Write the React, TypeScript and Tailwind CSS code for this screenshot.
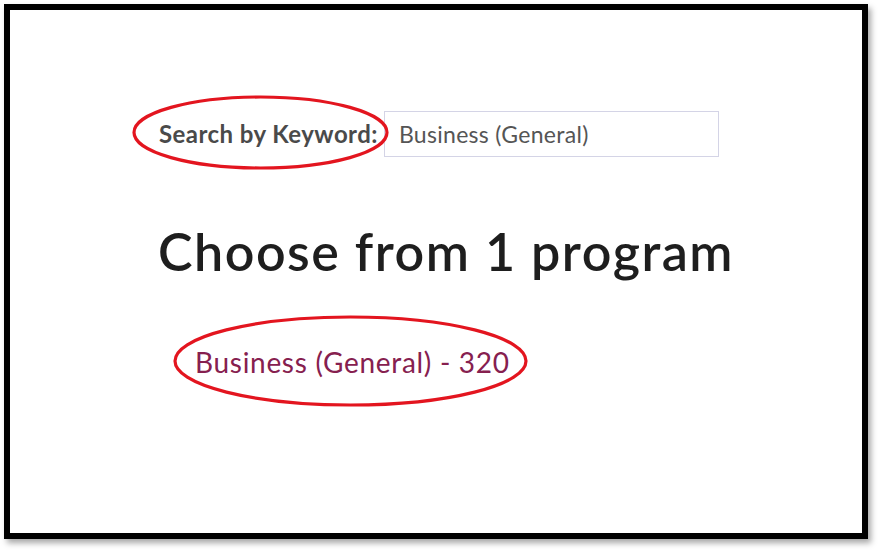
import React from 'react';

// red hand-drawn style annotation rings laid over the page
const Ring = ({ w, h, className }: { w: number; h: number; className: string }) => (
  <svg className={`absolute pointer-events-none ${className}`} width={w} height={h} viewBox={`0 0 ${w} ${h}`}>
    <ellipse cx={w / 2} cy={h / 2} rx={w / 2 - 2} ry={h / 2 - 2} fill="none" stroke="#e3151f" strokeWidth="3.2" />
  </svg>
);

const App = () => {
  return (
    <div className="w-[881px] h-[552px] bg-white pt-[4px] pl-[4px] font-['Lato','Liberation_Sans',sans-serif]">
      <div className="relative w-[864px] h-[535px] border-[6px] border-black bg-white shadow-[3px_4px_6px_rgba(0,0,0,0.35)]">
        {/* Search */}
        <div className="flex items-center pt-[101px] pl-[149px]">
          <label className="text-[24px] font-bold text-[#4a4a4a] mr-[6px] tracking-[0.45px] leading-none">Search by Keyword:</label>
          <div className="w-[335px] h-[46px] border border-[#d4d4e6] flex items-center pl-[14px] text-[23px] tracking-[0.3px] text-[#555]">
            Business (General)
          </div>
        </div>

        {/* Heading */}
        <h1 className="pl-[148px] mt-[68px] text-[52px] font-semibold text-[#1e1e1e] leading-none tracking-[1.5px]">
          Choose from 1 program
        </h1>

        {/* Result */}
        <a className="block pl-[185px] mt-[71px] text-[28px] text-[#86204f] leading-none tracking-[0.7px]">
          Business (General) - 320
        </a>

        <Ring w={257} h={75} className="left-[122px] top-[85px]" />
        <Ring w={355} h={92} className="left-[163px] top-[305px]" />
      </div>
    </div>
  );
};

export default App;
